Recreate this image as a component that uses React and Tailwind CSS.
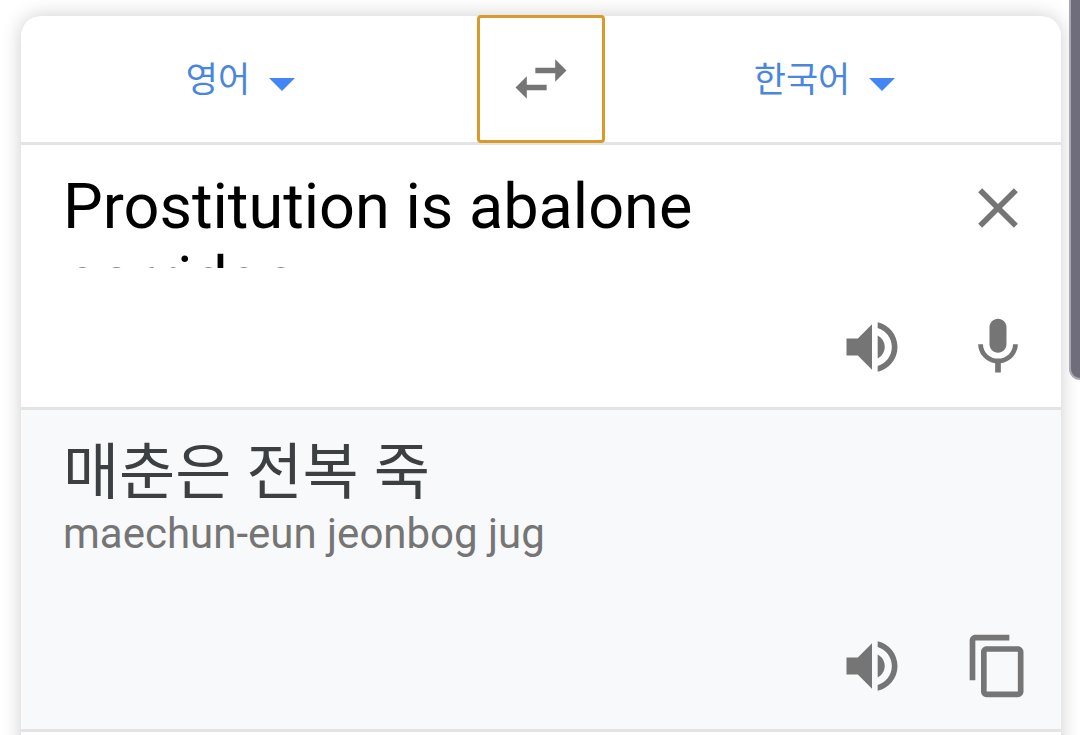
import React from "react";

const ICONS = {
  swap: "M6.99 11L3 15l3.99 4v-3H14v-2H6.99v-3zM21 9l-3.99-4v3H10v2h7.01v3L21 9z",
  close:
    "M19 6.41L17.59 5 12 10.59 6.41 5 5 6.41 10.59 12 5 17.59 6.41 19 12 13.41 17.59 19 19 17.59 13.41 12z",
  volume:
    "M3 9v6h4l5 5V4L7 9H3zm13.5 3c0-1.77-1.02-3.29-2.5-4.03v8.05c1.48-.73 2.5-2.25 2.5-4.02zM14 3.23v2.06c2.89.86 5 3.54 5 6.71s-2.11 5.85-5 6.71v2.06c4.01-.91 7-4.49 7-8.77s-2.99-7.86-7-8.77z",
  mic: "M12 14c1.66 0 2.99-1.34 2.99-3L15 5c0-1.66-1.34-3-3-3S9 3.34 9 5v6c0 1.66 1.34 3 3 3zm5.3-3c0 3-2.54 5.1-5.3 5.1S6.7 14 6.7 11H5c0 3.41 2.72 6.23 6 6.72V21h2v-3.28c3.28-.48 6-3.3 6-6.72h-1.7z",
  copy: "M16 1H4c-1.1 0-2 .9-2 2v14h2V3h12V1zm3 4H8c-1.1 0-2 .9-2 2v14c0 1.1.9 2 2 2h11c1.1 0 2-.9 2-2V7c0-1.1-.9-2-2-2zm0 16H8V7h11v14z",
};

function Icon({ name }) {
  return (
    <svg viewBox="0 0 24 24" className="size-[68px] fill-[#757575]" aria-hidden="true">
      <path d={ICONS[name]} />
    </svg>
  );
}

function IconButton({ name, label }) {
  return (
    <button
      type="button"
      aria-label={label}
      className="flex w-[126px] shrink-0 items-center justify-center self-stretch"
    >
      <Icon name={name} />
    </button>
  );
}

function LanguageSelect({ label, value }) {
  return (
    <div className="flex min-w-0 flex-1 items-center justify-center pt-[3px] pr-[17px]">
      <label className="flex items-center gap-[19px]">
        <select
          aria-label={label}
          defaultValue={value}
          className="field-sizing-content cursor-pointer appearance-none bg-transparent text-[35px] leading-[52px] text-[#4a86dc] outline-none"
        >
          <option>영어</option>
          <option>한국어</option>
        </select>
        <svg viewBox="0 0 26 13" className="mt-2 h-[13px] w-[26px] fill-[#4285f4]" aria-hidden="true">
          <path d="M0 0h26L13 13z" />
        </svg>
      </label>
    </div>
  );
}

export default function App() {
  return (
    <div className="relative min-h-screen overflow-hidden bg-white pt-4 pr-[19px] pl-[21px] font-[Roboto,'Noto_Sans_CJK_KR',sans-serif]">
      <main className="rounded-t-[20px] bg-white shadow-[0_0_20px_rgba(0,0,0,0.2)]">
        <header className="flex h-[129px] border-b-3 border-[#e4e4e4]">
          <LanguageSelect label="출발어" value="영어" />
          <button
            type="button"
            aria-label="언어 전환"
            className="-mt-px flex size-32 shrink-0 items-center justify-center rounded-sm border-3 border-[#d79a2b]"
          >
            <Icon name="swap" />
          </button>
          <LanguageSelect label="도착어" value="한국어" />
        </header>

        <section className="border-b-3 border-[#e4e4e4]">
          <div className="flex h-[142px] items-start">
            <textarea
              aria-label="번역할 텍스트"
              spellCheck={false}
              defaultValue="Prostitution is abalone porridge"
              className="mt-[25px] ml-[42px] h-[98px] min-w-0 flex-1 resize-none overflow-hidden pr-8 text-[63px] leading-[73px] text-black outline-none"
            />
            <div className="flex h-[126px]">
              <IconButton name="close" label="지우기" />
            </div>
          </div>
          <div className="flex h-[120px] justify-end">
            <IconButton name="volume" label="원문 듣기" />
            <IconButton name="mic" label="음성 입력" />
          </div>
        </section>

        <section className="border-b-3 border-[#e4e4e4] bg-[#f8f9fb]">
          <div className="h-[193px] px-[42px] pt-[27px]">
            <p className="text-[61px] leading-[72px] text-[#3c4043]">매춘은 전복 죽</p>
            <p className="text-[42px] leading-[50px] text-[#757575]">maechun-eun jeonbog jug</p>
          </div>
          <div className="flex h-[126px] justify-end">
            <IconButton name="volume" label="번역 듣기" />
            <IconButton name="copy" label="번역 복사" />
          </div>
        </section>
        <div className="h-8" />
      </main>
      <div className="absolute top-0 right-0 h-[380px] w-[11px] rounded-bl-[11px] border-b-2 border-l-2 border-[#a9a8b1] bg-[#6f6d7b]" />
    </div>
  );
}
